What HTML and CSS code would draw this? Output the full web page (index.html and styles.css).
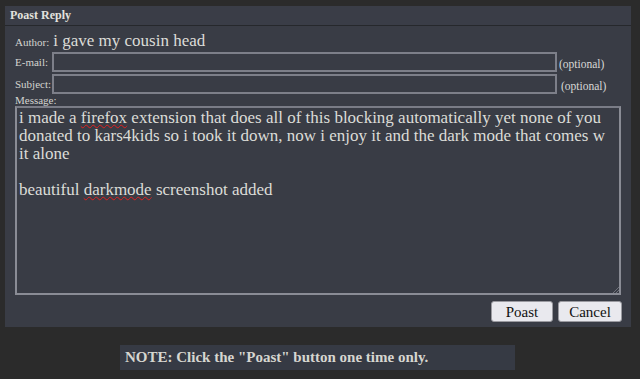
FILE: index.html
```html
<!DOCTYPE html>
<html>
<head>
<meta charset="utf-8">
<link rel="stylesheet" href="styles.css">
</head>
<body>
<form class="panel">
  <div class="panel-head">Poast Reply</div>
  <div class="panel-body">
    <div class="author-row"><span class="lbl">Author:</span><span class="author">i gave my cousin head</span></div>
    <div class="field-row"><label class="lbl">E-mail:</label><input class="inp" type="text"><span class="opt">(optional)</span></div>
    <div class="field-row"><label class="lbl">Subject:</label><input class="inp" type="text"><span class="opt opt2">(optional)</span></div>
    <div class="lbl msg-lbl">Message:</div>
    <div class="textarea">i made a <span class="sp">firefox</span> extension that does all of this blocking automatically yet none of you
donated to kars4kids so i took it down, now i enjoy it and the dark mode that comes w
it alone

beautiful <span class="sp">darkmode</span> screenshot added<svg class="grip" width="7" height="7" viewBox="0 0 7 7"><path d="M7 1L1 7M7 4L4 7" stroke="#6f717a" stroke-width="1"/></svg></div>
    <div class="actions">
      <button type="button" class="btn btn-poast">Poast</button>
      <button type="button" class="btn btn-cancel">Cancel</button>
    </div>
  </div>
</form>
<div class="note">NOTE: Click the "Poast" button one time only.</div>
</body>
</html>
```
FILE: styles.css
```css
html, body {
  margin: 0;
  padding: 0;
  background: #2b2b2b;
  font-family: "Liberation Serif", "DejaVu Serif", serif;
  color: #d8d8d6;
}
.panel {
  display: block;
  margin: 6px 0 0 5px;
  width: 626px;
  background: #393c45;
}
.panel-head {
  height: 19px;
  border-bottom: 1px solid #26282c;
  font-weight: bold;
  font-size: 12px;
  line-height: 19px;
  padding-left: 5px;
  color: #e2e2de;
  background: #3a3d47;
}
.panel-body {
  padding: 5px 0 5px 10px;
}
.lbl {
  font-size: 11px;
  color: #d4d4d0;
}
.author-row {
  display: flex;
  align-items: baseline;
  gap: 4px;
  height: 19px;
  line-height: 20px;
}
.author {
  font-size: 17px;
  color: #dcdcd8;
}
.field-row {
  display: flex;
  align-items: center;
  height: 20px;
  margin-top: 2px;
}
.field-row .lbl {
  width: 37px;
  flex: none;
}
.inp {
  box-sizing: border-box;
  width: 505px;
  height: 20px;
  margin: 0;
  border: 2px solid #7d7f89;
  background: #393c45;
  padding: 0 3px;
  color: #dcdcd8;
  font: inherit;
}
.opt {
  font-size: 11.5px;
  margin-left: 2px;
  padding-top: 3px;
}
.opt2 {
  margin-left: 4px;
}
.msg-lbl {
  height: 11px;
  line-height: 11px;
  margin-top: 1px;
}
.textarea {
  position: relative;
  box-sizing: border-box;
  width: 606px;
  height: 189px;
  border: 2px solid #8a8c95;
  border-top-color: #7a7c86;
  padding: 1px 2px 0;
  white-space: pre;
  font-size: 17px;
  line-height: 18px;
  color: #dcdcd8;
  overflow: hidden;
}
.sp {
  text-decoration: underline wavy #e02020;
  text-decoration-thickness: 1px;
  text-underline-offset: 1px;
}
.grip {
  position: absolute;
  right: 0;
  bottom: 0;
}
.actions {
  display: flex;
  justify-content: flex-end;
  gap: 5px;
  margin-top: 6px;
  padding-right: 9px;
}
.btn {
  box-sizing: border-box;
  height: 21px;
  border: 1px solid #9a9aa0;
  border-radius: 3px;
  background: #e9e9ee;
  color: #111;
  font-family: "Liberation Serif", serif;
  font-size: 15px;
  line-height: 18px;
  padding: 0;
}
.btn-poast { width: 62px; }
.btn-cancel { width: 64px; }
.note {
  box-sizing: border-box;
  width: 395px;
  height: 25px;
  margin: 18px 0 0 120px;
  background: #363a44;
  padding-left: 5px;
  font-weight: bold;
  font-size: 15px;
  line-height: 25px;
  color: #d6d6d0;
}
```
